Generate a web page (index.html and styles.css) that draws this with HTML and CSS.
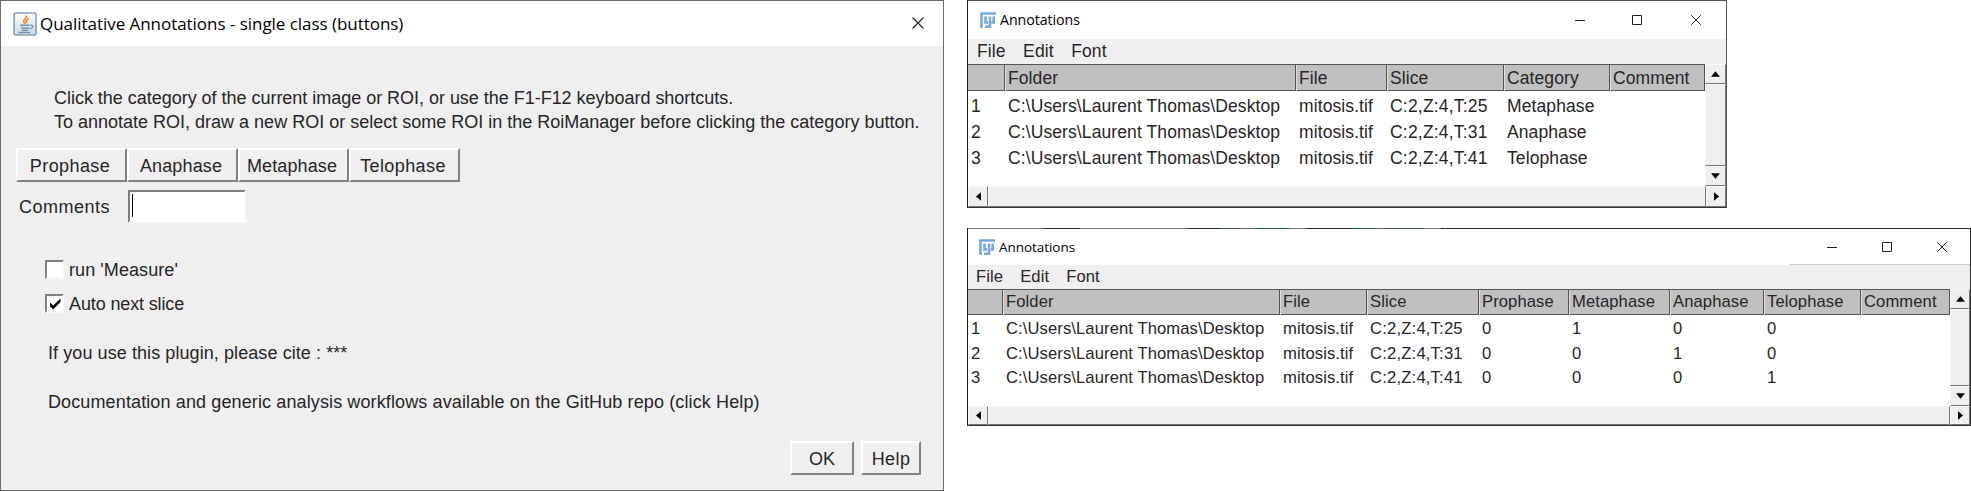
FILE: index.html
```html
<!DOCTYPE html>
<html lang="en">
<head>
<meta charset="utf-8">
<title>Qualitative Annotations</title>
<link rel="stylesheet" href="styles.css">
</head>
<body>
<main class="desktop">
  <section class="dialog">
    <header class="dialog-title">
      <svg class="java" viewBox="0 0 24 24">
        <defs><linearGradient id="jg" x1="0" y1="0" x2="0" y2="1"><stop offset="0" stop-color="#fdfdfd"/><stop offset="1" stop-color="#cddbe6"/></linearGradient></defs>
        <rect x="1" y="1" width="22" height="22" rx="1.5" fill="url(#jg)" stroke="#86a0b6" stroke-width="1.600"/>
        <path d="M13.500 3.500c1 3-4.500 4-2.500 7l1.500 1.500M16 6.500c-3 1.500-3.500 2.500-2 4.500" fill="none" stroke="#f0892e" stroke-width="1.700"/>
        <path d="M7 13.300h9.500M8 16h8M9 18.200h6M5.500 20.500h12M17 13.300c4-1 3.500 3-.5 3.500" fill="none" stroke="#6f95b3" stroke-width="1.400"/>
      </svg>
      <h1>Qualitative Annotations - single class (buttons)</h1>
      <svg class="close" viewBox="0 0 12 12"><path d="M.5.5l11 11M11.500.5l-11 11"/></svg>
    </header>
    <div class="dialog-body">
      <div class="intro">
        <p class="intro-keys">Click the category of the current image or ROI, or use the F1-F12 keyboard shortcuts.</p>
        <p class="intro-roi">To annotate ROI, draw a new ROI or select some ROI in the RoiManager before clicking the category button.</p>
      </div>
      <div class="classes">
        <button class="btn wide">Prophase</button><button class="btn">Anaphase</button><button class="btn">Metaphase</button><button class="btn wide">Telophase</button>
      </div>
      <div class="comment-row"><label>Comments</label><div class="field"><i class="caret"></i></div></div>
      <div class="checks">
        <div class="check"><i class="box"></i><span>run 'Measure'</span></div>
        <div class="check"><i class="box"><svg viewBox="0 0 12 12"><path d="M1 4.500v3.700L4.200 11.500 11.500 4V.5L4.200 7.500z"/></svg></i><span class="tight">Auto next slice</span></div>
      </div>
      <p class="note cite">If you use this plugin, please cite : ***</p>
      <p class="note docs">Documentation and generic analysis workflows available on the GitHub repo (click Help)</p>
      <div class="actions"><button class="btn ok">OK</button><button class="btn help">Help</button></div>
    </div>
  </section>
  <div class="tables">
    <section class="win first">
      <header class="win-title"><svg class="fiji" viewBox="0 0 16 16"><path d="M1.500 16V1.500H16M5.500 4.500v6h2.500M5 14.700h5V4.500M13.700 4.500v6h-2"/></svg><h2>Annotations</h2>
        <svg class="ctl min" viewBox="0 0 10 10"><path d="M0 5.500h10"/></svg><svg class="ctl max" viewBox="0 0 10 10"><path d="M.5.5h9v9h-9z"/></svg><svg class="ctl x" viewBox="0 0 10 10"><path d="M.2.2l9.600 9.600M9.800.2L.2 9.800"/></svg></header>
      <nav class="menu"><span>File</span><span>Edit</span><span>Font</span></nav>
      <div class="pane">
        <div class="grid">
          <div class="row head"><b></b><b>Folder</b><b>File</b><b>Slice</b><b>Category</b><b>Comment</b></div>
          <div class="row"><span>1</span><span>C:\Users\Laurent Thomas\Desktop</span><span>mitosis.tif</span><span class="slice">C:2,Z:4,T:25</span><span>Metaphase</span></div>
          <div class="row"><span>2</span><span>C:\Users\Laurent Thomas\Desktop</span><span>mitosis.tif</span><span class="slice">C:2,Z:4,T:31</span><span>Anaphase</span></div>
          <div class="row"><span>3</span><span>C:\Users\Laurent Thomas\Desktop</span><span>mitosis.tif</span><span class="slice">C:2,Z:4,T:41</span><span>Telophase</span></div>
        </div>
        <div class="vbar"><i class="raised cell"><svg viewBox="0 0 10 6"><path d="M0 6L5 0l5 6z"/></svg></i><i class="raised thumb"></i><i class="raised cell"><svg viewBox="0 0 10 6"><path d="M0 0l5 6 5-6z"/></svg></i></div>
      </div>
      <div class="hbar"><i class="raised cell"><svg class="side" viewBox="0 0 6 10"><path d="M6 0L0 5l6 5z"/></svg></i><i class="raised thumb"></i><i class="raised cell"><svg class="side" viewBox="0 0 6 10"><path d="M0 0l6 5-6 5z"/></svg></i></div>
    </section>
    <section class="win second">
      <header class="win-title"><svg class="fiji" viewBox="0 0 16 16"><path d="M1.500 16V1.500H16M5.500 4.500v6h2.500M5 14.700h5V4.500M13.700 4.500v6h-2"/></svg><h2>Annotations</h2>
        <svg class="ctl min" viewBox="0 0 10 10"><path d="M0 5.500h10"/></svg><svg class="ctl max" viewBox="0 0 10 10"><path d="M.5.5h9v9h-9z"/></svg><svg class="ctl x" viewBox="0 0 10 10"><path d="M.2.2l9.600 9.600M9.800.2L.2 9.800"/></svg></header>
      <nav class="menu"><span>File</span><span>Edit</span><span>Font</span></nav>
      <div class="pane">
        <div class="grid">
          <div class="row head"><b></b><b>Folder</b><b>File</b><b>Slice</b><b>Prophase</b><b>Metaphase</b><b>Anaphase</b><b>Telophase</b><b>Comment</b></div>
          <div class="row"><span>1</span><span>C:\Users\Laurent Thomas\Desktop</span><span>mitosis.tif</span><span class="slice">C:2,Z:4,T:25</span><span>0</span><span>1</span><span>0</span><span>0</span></div>
          <div class="row"><span>2</span><span>C:\Users\Laurent Thomas\Desktop</span><span>mitosis.tif</span><span class="slice">C:2,Z:4,T:31</span><span>0</span><span>0</span><span>1</span><span>0</span></div>
          <div class="row"><span>3</span><span>C:\Users\Laurent Thomas\Desktop</span><span>mitosis.tif</span><span class="slice">C:2,Z:4,T:41</span><span>0</span><span>0</span><span>0</span><span>1</span></div>
        </div>
        <div class="vbar"><i class="raised cell"><svg viewBox="0 0 10 6"><path d="M0 6L5 0l5 6z"/></svg></i><i class="raised thumb"></i><i class="raised cell"><svg viewBox="0 0 10 6"><path d="M0 0l5 6 5-6z"/></svg></i></div>
      </div>
      <div class="hbar"><i class="raised cell"><svg class="side" viewBox="0 0 6 10"><path d="M6 0L0 5l6 5z"/></svg></i><i class="raised thumb"></i><i class="raised cell"><svg class="side" viewBox="0 0 6 10"><path d="M0 0l6 5-6 5z"/></svg></i></div>
    </section>
  </div>
</main>
</body>
</html>
```
FILE: styles.css
```css
* { box-sizing: border-box; }
body {
  margin: 0;
  background: #fff;
  color: #262626;
  font: 18px "Liberation Sans", Arial, sans-serif;
}
h1, h2, p { margin: 0; font-weight: normal; }
svg { display: block; flex: none; }
i { font-style: normal; }

.desktop { display: flex; gap: 23px; width: 1971px; height: 491px; overflow: hidden; }

/* Dialog */
.dialog { width: 944px; height: 491px; flex: none; border: 1px solid #6a6a6a; background: #efefef; }
.dialog-title { display: flex; align-items: center; height: 45px; padding: 0 19px 0 12px; background: #fff; color: #000; }
.java { width: 24px; height: 24px; margin-right: 3px; }
.dialog-title h1 { font: 17px/24px "Open Sans", "Noto Sans", sans-serif; letter-spacing: -0.04px; white-space: nowrap; }
.close { width: 12px; height: 12px; margin: 0 0 1px auto; fill: none; stroke: #222; stroke-width: 1.1; }
.dialog-body { padding: 41px 0 0 15px; }
.intro { padding-left: 38px; line-height: 23.5px; white-space: nowrap; }
.intro-keys { letter-spacing: -0.025px; }
.intro-roi { letter-spacing: 0; }
.classes { display: flex; margin-top: 14px; }
.btn {
  width: 111px; height: 34px; padding: 2px 3px 0 0; font: inherit; color: inherit; letter-spacing: 0.12px; background: #efefef;
  border: 2px solid; border-color: #fff #828282 #828282 #fff; border-radius: 0; white-space: nowrap;
}
.wide { letter-spacing: 0.4px; }
.comment-row { display: flex; align-items: center; height: 33px; margin-top: 8px; padding-left: 3px; }
.comment-row label { width: 109px; letter-spacing: 0.5px; padding-top: 2px; }
.field { width: 118px; height: 33px; padding: 2px; background: #fff; border: 2px solid; border-color: #808080 #fafafa #fafafa #808080; }
.caret { display: block; width: 1px; height: 23px; background: #000; }
.checks { display: flex; flex-direction: column; gap: 15px; margin-top: 37px; padding-left: 29px; }
.check { display: flex; align-items: center; gap: 5px; height: 19px; letter-spacing: 0.08px; }
.check span { padding-top: 2px; }
.check .tight { letter-spacing: -0.13px; }
.box { display: flex; align-items: center; justify-content: center; width: 19px; height: 19px; background: #fff; border: 2px solid; border-color: #828282 #f8f8f8 #f8f8f8 #828282; }
.box svg { width: 12px; height: 12px; }
.note { height: 24px; margin: 28px 0 0 32px; line-height: 24px; white-space: nowrap; }
.note + .note { margin-top: 25px; }
.cite { letter-spacing: 0.08px; }
.docs { letter-spacing: 0.12px; }
.actions { display: flex; gap: 7px; margin: 27px 0 0 774px; }
.ok { width: 64px; padding-right: 0; }
.help { width: 60px; padding-right: 0; letter-spacing: 0.4px; }

/* Result tables */
.tables { display: flex; flex-direction: column; gap: 20px; flex: 1; }
.win { display: flex; flex-direction: column; flex: none; background: #fff; border: 1px solid #555; border-bottom-color: #333; border-left-color: #222; }
.win-title { display: flex; align-items: center; flex: none; color: #000; }
.fiji { width: 16px; height: 16px; margin-right: 4px; fill: none; stroke: #74a9e0; stroke-width: 2.6; }
.win-title h2 { font: 14.200px/20px "Open Sans", "Noto Sans", sans-serif; letter-spacing: -0.05px; }
.ctl { width: 10px; height: 10px; fill: none; stroke: #222; }
.min { margin-left: auto; }
.menu { display: flex; flex: none; background: #efefef; letter-spacing: 0.1px; }
.pane { display: flex; flex: none; }
.grid { flex: 1; }
.row { display: grid; white-space: nowrap; letter-spacing: 0.1px; }
.row > * { padding-left: 4px; }
.row > :first-child { padding-left: 3px; }
.row > .slice { letter-spacing: 0.2px; }
.head { margin-bottom: 2px; background: #c0c0c0; border: solid #555; border-width: 1px 1px 1px 0; }
.head b { padding-left: 3px; font-weight: normal; border-left: 1px solid #555; box-shadow: inset 1px 0 #ddd; }
.head b:first-child { border: 0; box-shadow: none; }
.vbar { display: flex; flex-direction: column; width: 21px; flex: none; background: #efefef; }
.hbar { display: flex; flex: none; background: #efefef; }
.raised { display: flex; align-items: center; justify-content: center; background: #efefef; border: 1px solid; border-color: #f8f8f8 #777 #777 #f8f8f8; }
.thumb { flex: 1; }
.vbar .cell { height: 20px; }
.vbar svg { width: 9px; height: 6px; }
.hbar .cell { width: 20px; }
.side { width: 5px; height: 9px; }

.first { width: 760px; height: 208px; font-size: 17.500px; }
.first .win-title { height: 38px; padding: 6px 25px 6px 12px; }
.first .win-title .ctl { margin-bottom: 1px; }
.first .max { margin: 0 49px 0 47px; }
.first .menu { height: 25px; gap: 17.500px; padding-left: 9px; line-height: 25px; }
.first .pane { height: 122px; }
.first .row { grid-template-columns: 36px 291px 91px 117px 106px 1fr; line-height: 26.200px; }
.first .head { height: 27px; line-height: 26px; margin-bottom: 2px; }
.first .hbar { height: 21px; }

/* The desktop behind shows through the top edge of this window */
.second {
  width: 1004px; height: 198px; padding-top: 1px; font-size: 16.600px;
  border-top: 0; border-right-color: #2b2b2b;
  background: linear-gradient(90deg, #777 76px, #2b2b2b 76px 112px, #777 112px 220px, #2b2b2b 220px 252px, #22604f 252px 268px, #666 268px 286px, #22604f 286px 321px, #777 321px 338px, #2b2b2b 338px 386px, #22604f 386px 404px, #666 404px 420px, #22604f 420px 456px, #777 456px 473px, #2b2b2b 473px) 0 0 / 100% 1px no-repeat #fff;
}
.second .win-title { height: 36px; padding: 0 23px 0 11px; background: linear-gradient(#ccc, #ccc) right bottom / 181px 1px no-repeat; }
.second .win-title h2 { font-size: 13.500px; }
.second .max { margin: 0 45px; }
.second .menu { height: 24px; gap: 17px; padding-left: 8px; line-height: 24px; }
.second .pane { height: 117px; }
.second .row { grid-template-columns: 34px 277px 87px 112px 90px 101px 94px 97px 1fr; line-height: 24.700px; }
.second .head { height: 26px; }
.second .vbar { width: 20px; }
.second .hbar { height: 19px; }
```
